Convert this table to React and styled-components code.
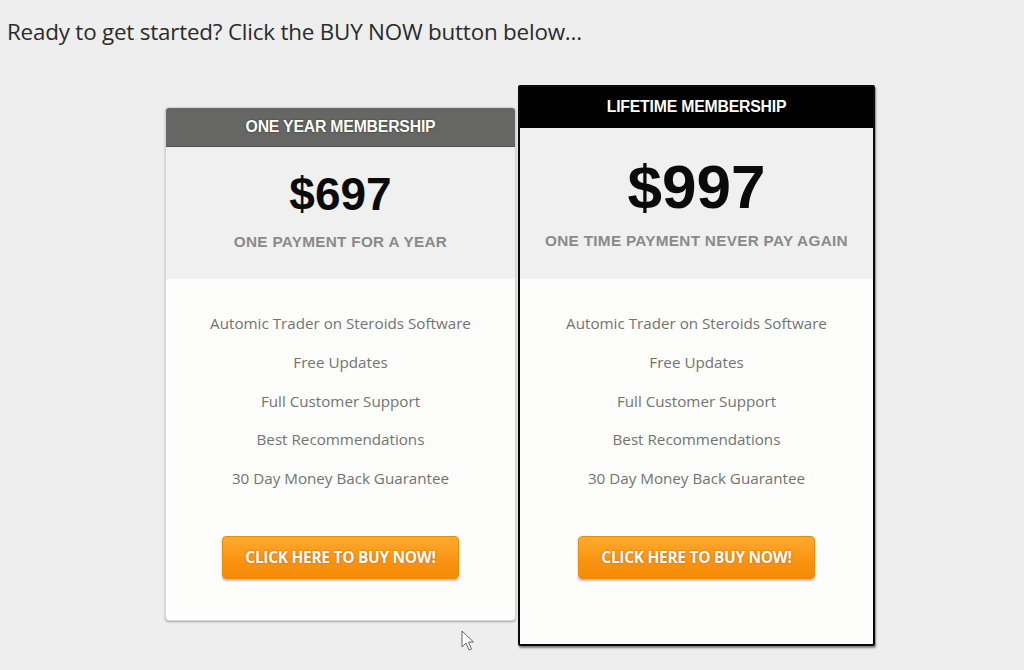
import React from 'react';
import styled, { createGlobalStyle, css } from 'styled-components';

const GlobalStyle = createGlobalStyle`
  html, body {
    margin: 0;
    padding: 0;
    background: #eeeeee;
  }
  body {
    font-family: 'Open Sans', 'Liberation Sans', sans-serif;
  }
`;

const Page = styled.div`
  position: relative;
  width: 1024px;
  height: 670px;
  overflow: hidden;
  background: #eeeeee;
`;

const Intro = styled.p`
  margin: 0;
  padding: 17px 0 0 7px;
  font-size: 22.4px;
  line-height: 30px;
  color: #2b2b2b;
  letter-spacing: -0.2px;
`;

const Plans = styled.div`
  display: flex;
  align-items: flex-start;
  gap: 2px;
  padding: 38px 0 0 165px;
`;

const Card = styled.div`
  box-sizing: border-box;
  display: flex;
  flex-direction: column;
  background: #fdfdfc;
  ${({ featured }) =>
    featured
      ? css`
          width: 357px;
          border: 2px solid #0a0a0a;
          border-radius: 2px;
          box-shadow: 1px 2px 2px rgba(0, 0, 0, 0.45);
        `
      : css`
          width: 351px;
          margin-top: 22px;
          border: 1px solid #d4d4d4;
          border-radius: 4px;
          overflow: hidden;
          box-shadow: 0 1px 2px rgba(0, 0, 0, 0.3);
        `}
`;

const Header = styled.div`
  display: flex;
  align-items: center;
  justify-content: center;
  font-family: 'Liberation Sans', Arial, sans-serif;
  font-weight: 700;
  font-size: 15.8px;
  color: #ffffff;
  letter-spacing: -0.2px;
  text-shadow: 0 0 2px rgba(0, 0, 0, 0.6);
  background: ${({ featured }) => (featured ? '#000000' : '#666664')};
  height: ${({ featured }) => (featured ? '40px' : '38px')};
  border-bottom: 1px solid ${({ featured }) => (featured ? '#000' : '#4e4e4e')};
`;

const PriceBox = styled.div`
  display: flex;
  flex-direction: column;
  align-items: center;
  background: #f0f0f0;
  height: ${({ featured }) => (featured ? '151px' : '132px')};
  box-sizing: border-box;
  padding-top: ${({ featured }) => (featured ? '26px' : '21px')};
`;

const Price = styled.div`
  font-family: 'Liberation Sans', Arial, sans-serif;
  font-weight: 700;
  color: #0b0b0b;
  font-size: ${({ featured }) => (featured ? '62px' : '46px')};
  line-height: ${({ featured }) => (featured ? '66px' : '52px')};
`;

const PriceNote = styled.div`
  font-family: 'Liberation Sans', Arial, sans-serif;
  font-weight: 700;
  font-size: 15.3px;
  color: #8a8a8a;
  letter-spacing: 0.3px;
  margin-top: ${({ featured }) => (featured ? '12px' : '13px')};
`;

const Body = styled.div`
  display: flex;
  flex-direction: column;
  align-items: center;
  padding-top: 32px;
  height: ${({ featured }) => (featured ? '365px' : '341px')};
  box-sizing: border-box;
`;

const Features = styled.ul`
  list-style: none;
  margin: 0;
  padding: 0;
  text-align: center;
`;

const Feature = styled.li`
  font-size: 15.2px;
  line-height: 24px;
  color: #737373;
  margin-bottom: 14.8px;
`;

const BuyButton = styled.button`
  margin-top: 31px;
  width: 237px;
  height: 43px;
  border: 1px solid #e88a0a;
  border-radius: 4px;
  background: linear-gradient(#ffab2e, #fa9412 55%, #f68a05);
  box-shadow: 0 2px 2px rgba(0, 0, 0, 0.25);
  font-family: 'Open Sans', 'Liberation Sans', sans-serif;
  font-weight: 700;
  font-size: 15.5px;
  color: #ffffff;
  letter-spacing: -0.3px;
  text-shadow: 0 0 2px rgba(150, 70, 0, 0.7);
  cursor: pointer;
`;

const Pointer = styled.svg`
  position: absolute;
  left: 461px;
  top: 630px;
`;

const features = [
  'Automic Trader on Steroids Software',
  'Free Updates',
  'Full Customer Support',
  'Best Recommendations',
  '30 Day Money Back Guarantee',
];

const plans = [
  { title: 'ONE YEAR MEMBERSHIP', price: '$697', note: 'ONE PAYMENT FOR A YEAR' },
  { title: 'LIFETIME MEMBERSHIP', price: '$997', note: 'ONE TIME PAYMENT NEVER PAY AGAIN', featured: true },
];

const App = () => (
  <Page>
    <GlobalStyle />
    <Intro>Ready to get started? Click the BUY NOW button below...</Intro>
    <Plans>
      {plans.map((plan) => (
        <Card key={plan.title} featured={plan.featured}>
          <Header featured={plan.featured}>{plan.title}</Header>
          <PriceBox featured={plan.featured}>
            <Price featured={plan.featured}>{plan.price}</Price>
            <PriceNote featured={plan.featured}>{plan.note}</PriceNote>
          </PriceBox>
          <Body featured={plan.featured}>
            <Features>
              {features.map((f) => (
                <Feature key={f}>{f}</Feature>
              ))}
            </Features>
            <BuyButton>CLICK HERE TO BUY NOW!</BuyButton>
          </Body>
        </Card>
      ))}
    </Plans>
    <Pointer width="14" height="22" viewBox="0 0 14 22">
      <path d="M1 1 L1 17 L5 13 L8 20 L10.5 19 L7.5 12 L12.5 12 Z" fill="#fff" stroke="#666" strokeWidth="1" strokeLinejoin="round" />
    </Pointer>
  </Page>
);

export default App;
